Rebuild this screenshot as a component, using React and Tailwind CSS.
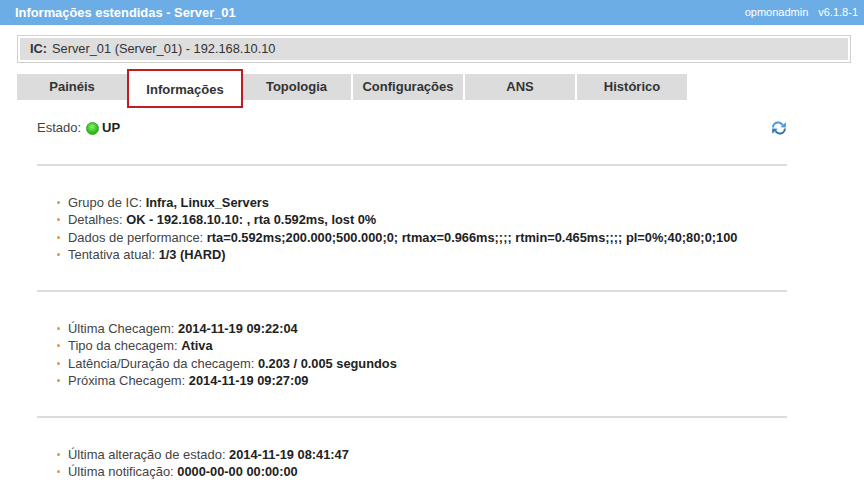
const font = { fontFamily: '"Liberation Sans", Arial, sans-serif' };

function Tab({ children, w }) {
  return (
    <div className={`${w} h-[26px] bg-[#dcdcdc] flex items-center justify-center text-[13px] font-bold text-[#333] shrink-0`}>
      {children}
    </div>
  );
}

function Item({ label, value }) {
  return (
    <li className="flex items-center h-[17.5px] text-[12.95px] text-[#444]">
      <span className="w-[3px] h-[3px] rounded-full bg-[#dd9a48] mr-[8px] shrink-0" />
      <span className="whitespace-pre">{label} </span>
      <b className="text-[#222] text-[12.82px] whitespace-pre">{value}</b>
    </li>
  );
}

function Section({ items, className }) {
  return (
    <ul className={`pl-[20px] ${className}`}>
      {items.map(([l, v]) => (
        <Item key={l} label={l} value={v} />
      ))}
    </ul>
  );
}

function Rule() {
  return <div className="h-[2px] bg-[#dcdcdc] w-[750px]" />;
}

function RefreshIcon() {
  return (
    <svg width="16" height="16" viewBox="0 0 16 16" fill="none">
      <path d="M2 7.5 C2 4 5 2 8 2.6 C9.6 2.9 10.6 3.8 11.6 5" stroke="#4a9ad8" strokeWidth="2" />
      <path d="M14.8 2.2 L14.8 7.6 L9.4 7.2 Z" fill="#4a9ad8" />
      <path d="M14 8.5 C14 12 11 14 8 13.4 C6.4 13.1 5.4 12.2 4.4 11" stroke="#2f78b8" strokeWidth="2" />
      <path d="M1.2 13.8 L1.2 8.4 L6.6 8.8 Z" fill="#2f78b8" />
    </svg>
  );
}

export default function App() {
  return (
    <div className="w-[864px] h-[497px] overflow-hidden bg-white" style={font}>
      <header className="h-[25px] bg-[#6cade6] flex items-center justify-between pl-[15px] pr-[6px] text-white">
        <span className="text-[12.9px] font-bold">Informações estendidas - Server_01</span>
        <div className="flex gap-[10px] text-[11px]">
          <span>opmonadmin</span>
          <span>v6.1.8-1</span>
        </div>
      </header>

      <div className="mt-[10px] ml-[17px] w-[834px] h-[28px] border border-[#cfcfcf] p-[2px]">
        <div className="h-full bg-[#dedede] flex items-center pl-[10px] text-[12.8px] text-[#333]">
          <b className="mr-[5px]">IC:</b>Server_01 (Server_01) - 192.168.10.10
        </div>
      </div>

      <nav className="mt-[11px] ml-[17px] flex items-start h-[35px]">
        <Tab w="w-[110px]">Painéis</Tab>
        <div className="w-[116px] h-[39px] -mt-[5px] bg-white border-2 border-[#c01c22] flex items-center justify-center text-[13px] font-bold text-[#333] shrink-0 pt-[3px] relative z-10">
          Informações
        </div>
        <div className="-ml-[1px] flex gap-[2px]">
          <Tab w="w-[109px]">Topologia</Tab>
          <Tab w="w-[110px]">Configurações</Tab>
          <Tab w="w-[110px]">ANS</Tab>
          <Tab w="w-[110px]">Histórico</Tab>
        </div>
      </nav>

      <main className="ml-[37px] w-[750px]">
        <div className="flex items-center justify-between h-[20px] mt-[9px] text-[13px] text-[#444]">
          <div className="flex items-center">
            <span className="mr-[5px]">Estado:</span>
            <span
              className="w-[13px] h-[13px] rounded-full border border-[#3f9f2a] mr-[3px]"
              style={{ background: "radial-gradient(circle at 45% 35%, #8cf06a, #2fc01e 60%, #1f9a14)" }}
            />
            <b className="text-[#222]">UP</b>
          </div>
          <RefreshIcon />
        </div>

        <div className="mt-[26px]"><Rule /></div>
        <Section
          className="mt-[27.5px]"
          items={[
            ["Grupo de IC:", "Infra, Linux_Servers"],
            ["Detalhes:", "OK - 192.168.10.10: , rta 0.592ms, lost 0%"],
            ["Dados de performance:", "rta=0.592ms;200.000;500.000;0; rtmax=0.966ms;;;; rtmin=0.465ms;;;; pl=0%;40;80;0;100"],
            ["Tentativa atual:", "1/3 (HARD)"],
          ]}
        />
        <div className="mt-[26.5px]"><Rule /></div>
        <Section
          className="mt-[27.5px]"
          items={[
            ["Última Checagem:", "2014-11-19 09:22:04"],
            ["Tipo da checagem:", "Ativa"],
            ["Latência/Duração da checagem:", "0.203 / 0.005 segundos"],
            ["Próxima Checagem:", "2014-11-19 09:27:09"],
          ]}
        />
        <div className="mt-[26.5px]"><Rule /></div>
        <Section
          className="mt-[27.5px]"
          items={[
            ["Última alteração de estado:", "2014-11-19 08:41:47"],
            ["Última notificação:", "0000-00-00 00:00:00"],
          ]}
        />
      </main>
    </div>
  );
}
